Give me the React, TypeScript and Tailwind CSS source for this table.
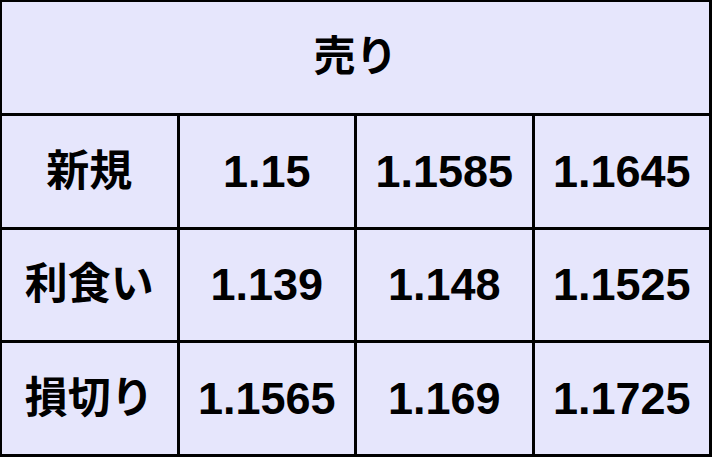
import React from 'react'

const rows = [
  { label: '新規', values: ['1.15', '1.1585', '1.1645'] },
  { label: '利食い', values: ['1.139', '1.148', '1.1525'] },
  { label: '損切り', values: ['1.1565', '1.169', '1.1725'] },
]

const font = { fontFamily: '"Liberation Sans", "Noto Sans CJK JP", sans-serif' }

export default function App() {
  return (
    <div
      className="w-[712px] h-[457px] bg-black pt-[2px] pl-[2px] pr-[3px] pb-[3px] grid grid-cols-4 grid-rows-4 gap-[3px] text-black"
      style={font}
    >
      {/* Header spanning all columns */}
      <div className="col-span-4 bg-[#e6e6fc] flex items-center justify-center text-[42px] font-semibold leading-none">
        売り
      </div>

      {rows.map((row) => (
        <React.Fragment key={row.label}>
          <div className="bg-[#e6e6fc] flex items-center justify-center text-[43px] font-semibold leading-none">
            {row.label}
          </div>
          {row.values.map((v, i) => (
            <div
              key={i}
              className="bg-[#e6e6fc] flex items-center justify-center text-[45px] font-bold leading-none"
            >
              {v}
            </div>
          ))}
        </React.Fragment>
      ))}
    </div>
  )
}
